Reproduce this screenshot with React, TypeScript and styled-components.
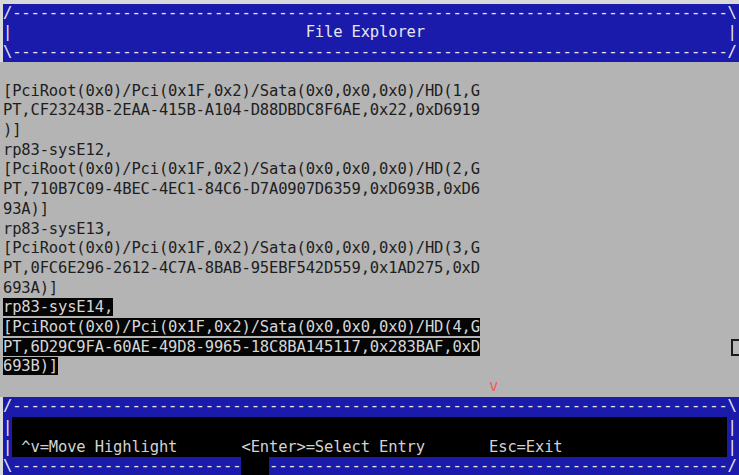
import React from "react";
import styled, { createGlobalStyle } from "styled-components";

const Global = createGlobalStyle`
  html, body { margin: 0; padding: 0; background: #d8d8d8; }
  body { font-family: "DejaVu Sans Mono", "Liberation Mono", monospace; }
`;

const BLUE = "#1a1aab";
const GRAY = "#b4b4b4";

const Screen = styled.div`
  width: 739px;
  height: 475px;
  box-sizing: border-box;
  padding-top: 4px;
  background: #d8d8d8;
  overflow: hidden;
  display: flex;
  flex-direction: column;
  font-family: "DejaVu Sans Mono", "Liberation Mono", monospace;
  font-size: 15.5px;
  letter-spacing: -0.16px;
`;

const Frame = styled.div<{ $h: number }>`
  margin-left: 3px;
  height: ${(p) => p.$h}px;
  background: ${BLUE};
  color: #e6e6f0;
  display: flex;
  flex-direction: column;
`;

const Content = styled.div`
  height: 335px;
  background: ${GRAY};
  color: #1e1e1e;
  padding-left: 3px;
  display: flex;
  flex-direction: column;
`;

const Row = styled.div<{ $h: number }>`
  height: ${(p) => p.$h}px;
  line-height: ${(p) => p.$h}px;
  white-space: pre;
  flex: none;
`;

const Hl = styled.span`
  background: #050505;
  color: #d6d6d6;
`;

const Bar = styled.span`
  background: #000;
  color: #d2d2d2;
  width: calc(78 * 9.17px);
  height: 100%;
  vertical-align: top;
  display: inline-block;
`;

const Gap = styled.span`
  background: #000;
`;

const Arrow = styled.span`
  color: #f25a5a;
`;

const CursorBox = styled.span`
  display: inline-block;
  width: 12px;
  height: 17px;
  margin-left: 3px;
  vertical-align: middle;
  border: 2px solid #1a1a1a;
  background: #b8b8b8;
  box-sizing: border-box;
`;

const dash = (n: number) => "-".repeat(n);
const sp = (n: number) => " ".repeat(n);

export default function App() {
  const hh = 58 / 3;
  const ch = 19.7;
  const fh = 19.5;
  return (
    <>
      <Global />
      <Screen>
        <Frame $h={58}>
          <Row $h={hh}>{"/" + dash(78) + "\\"}</Row>
          <Row $h={hh}>{"|" + sp(32) + "File Explorer" + sp(33) + "|"}</Row>
          <Row $h={hh}>{"\\" + dash(78) + "/"}</Row>
        </Frame>
        <Content>
          <Row $h={ch}>{" "}</Row>
          <Row $h={ch}>[PciRoot(0x0)/Pci(0x1F,0x2)/Sata(0x0,0x0,0x0)/HD(1,G</Row>
          <Row $h={ch}>PT,CF23243B-2EAA-415B-A104-D88DBDC8F6AE,0x22,0xD6919</Row>
          <Row $h={ch}>{")]"}</Row>
          <Row $h={ch}>rp83-sysE12,</Row>
          <Row $h={ch}>[PciRoot(0x0)/Pci(0x1F,0x2)/Sata(0x0,0x0,0x0)/HD(2,G</Row>
          <Row $h={ch}>PT,710B7C09-4BEC-4EC1-84C6-D7A0907D6359,0xD693B,0xD6</Row>
          <Row $h={ch}>93A)]</Row>
          <Row $h={ch}>rp83-sysE13,</Row>
          <Row $h={ch}>[PciRoot(0x0)/Pci(0x1F,0x2)/Sata(0x0,0x0,0x0)/HD(3,G</Row>
          <Row $h={ch}>PT,0FC6E296-2612-4C7A-8BAB-95EBF542D559,0x1AD275,0xD</Row>
          <Row $h={ch}>693A)]</Row>
          <Row $h={ch}>
            <Hl>rp83-sysE14,</Hl>
          </Row>
          <Row $h={ch}>
            <Hl>[PciRoot(0x0)/Pci(0x1F,0x2)/Sata(0x0,0x0,0x0)/HD(4,G</Hl>
          </Row>
          <Row $h={ch}>
            <Hl>PT,6D29C9FA-60AE-49D8-9965-18C8BA145117,0x283BAF,0xD</Hl>
            {sp(27)}
            <CursorBox />
          </Row>
          <Row $h={ch}>
            <Hl>693B)]</Hl>
          </Row>
          <Row $h={ch}>
            {sp(53)}
            <Arrow>v</Arrow>
          </Row>
        </Content>
        <Frame $h={78}>
          <Row $h={fh}>{"/" + dash(78) + "\\"}</Row>
          <Row $h={20}>
            {"|"}
            <Bar>{" "}</Bar>
            {"|"}
          </Row>
          <Row $h={20}>
            {"|"}
            <Bar>{" ^v=Move Highlight" + sp(7) + "<Enter>=Select Entry" + sp(7) + "Esc=Exit"}</Bar>
            {"|"}
          </Row>
          <Row $h={18.5}>
            {"\\" + dash(25)}
            <Gap>{sp(3)}</Gap>
            {dash(50) + "/"}
          </Row>
        </Frame>
      </Screen>
    </>
  );
}
